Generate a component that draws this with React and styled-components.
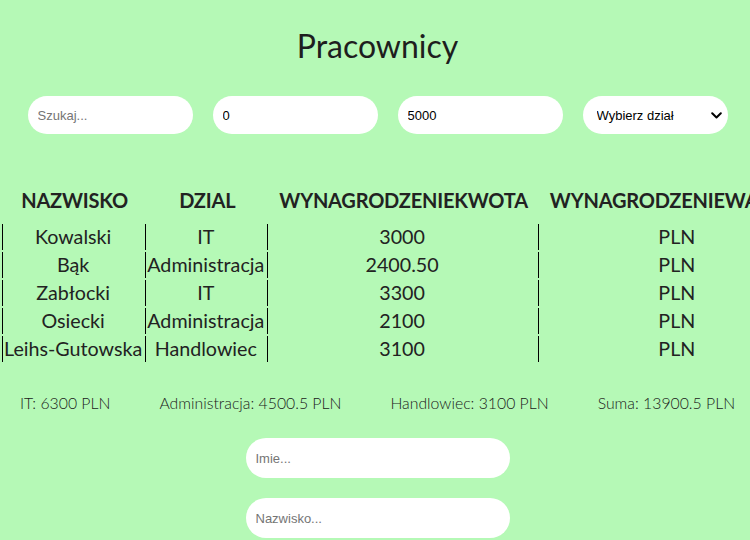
import React from "react";
import styled, { createGlobalStyle } from "styled-components";

const employees = [
  { nazwisko: "Kowalski", dzial: "IT", kwota: "3000", waluta: "PLN" },
  { nazwisko: "Bąk", dzial: "Administracja", kwota: "2400.50", waluta: "PLN" },
  { nazwisko: "Zabłocki", dzial: "IT", kwota: "3300", waluta: "PLN" },
  { nazwisko: "Osiecki", dzial: "Administracja", kwota: "2100", waluta: "PLN" },
  { nazwisko: "Leihs-Gutowska", dzial: "Handlowiec", kwota: "3100", waluta: "PLN" },
];

const summary = [
  "IT: 6300 PLN",
  "Administracja: 4500.5 PLN",
  "Handlowiec: 3100 PLN",
  "Suma: 13900.5 PLN",
];

const App = () => {
  return (
    <Page>
      <GlobalStyle />
      <Title>Pracownicy</Title>

      <Filters>
        <Field type="text" placeholder="Szukaj..." />
        <Field type="number" defaultValue="0" />
        <Field type="number" defaultValue="5000" />
        <SelectWrap>
          <Select defaultValue="">
            <option value="">Wybierz dział</option>
            <option value="IT">IT</option>
            <option value="Administracja">Administracja</option>
            <option value="Handlowiec">Handlowiec</option>
          </Select>
          <Chevron width="11" height="7" viewBox="0 0 11 7">
            <path d="M1.2 1.2 L5.5 5.5 L9.8 1.2" fill="none" stroke="#000" strokeWidth="2" strokeLinecap="round" strokeLinejoin="round" />
          </Chevron>
        </SelectWrap>
      </Filters>

      <Table>
        <thead>
          <tr>
            <Th>NAZWISKO</Th>
            <Th>DZIAL</Th>
            <Th>WYNAGRODZENIEKWOTA</Th>
            <Th>WYNAGRODZENIEWALUTA</Th>
          </tr>
        </thead>
        <tbody>
          {employees.map((e) => (
            <tr key={e.nazwisko}>
              <Td>{e.nazwisko}</Td>
              <Td>{e.dzial}</Td>
              <Td>{e.kwota}</Td>
              <Td>{e.waluta}</Td>
            </tr>
          ))}
        </tbody>
      </Table>

      <Summary>
        {summary.map((s) => (
          <SummaryItem key={s}>{s}</SummaryItem>
        ))}
      </Summary>

      <AddForm>
        <FormField type="text" placeholder="Imie..." />
        <FormField type="text" placeholder="Nazwisko..." />
      </AddForm>
    </Page>
  );
};

const GlobalStyle = createGlobalStyle`
  html, body {
    margin: 0;
    padding: 0;
    overflow: hidden;
    background-color: #b5f9b6;
  }
`;

const Page = styled.div`
  font-family: Lato, "Noto Sans", sans-serif;
  color: #222;
  padding-top: 27px;
`;

const Title = styled.h1`
  margin: 0;
  padding-left: 5px;
  font-size: 32px;
  font-weight: 400;
  line-height: 38px;
  text-align: center;
  color: #1e1e1e;
`;

const Filters = styled.div`
  display: flex;
  justify-content: center;
  gap: 20px;
  margin-top: 31px;
  padding-left: 5px;
`;

const Field = styled.input`
  width: 165px;
  height: 38px;
  box-sizing: border-box;
  border: none;
  outline: none;
  border-radius: 19px;
  background: #fff;
  padding: 0 10px;
  font-family: "Liberation Sans", Arial, sans-serif;
  font-size: 13px;
  color: #000;
  -moz-appearance: textfield;

  &::placeholder {
    color: #757575;
  }

  &::-webkit-outer-spin-button,
  &::-webkit-inner-spin-button {
    -webkit-appearance: none;
    margin: 0;
  }
`;

const SelectWrap = styled.div`
  position: relative;
  width: 145px;
  height: 38px;
`;

const Select = styled.select`
  appearance: none;
  -webkit-appearance: none;
  width: 100%;
  height: 100%;
  border: none;
  outline: none;
  border-radius: 19px;
  background: #fff;
  padding: 0 28px 0 14px;
  font-family: "Liberation Sans", Arial, sans-serif;
  font-size: 13px;
  color: #000;
`;

const Chevron = styled.svg`
  position: absolute;
  right: 6px;
  top: 16px;
  pointer-events: none;
`;

const Table = styled.table`
  margin-top: 42px;
  border-spacing: 2px;
  font-size: 20px;
  line-height: 24px;
`;

const Th = styled.th`
  padding: 10px 8px 10px 12px;
  font-weight: 700;
  letter-spacing: -0.2px;
  white-space: nowrap;
`;

const Td = styled.td`
  padding: 1px;
  font-size: 19.7px;
  text-align: center;
  border-left: 1px solid #000;
  white-space: nowrap;
`;

const Summary = styled.div`
  display: flex;
  justify-content: center;
  gap: 49px;
  margin-top: 30px;
  padding-left: 5px;
`;

const SummaryItem = styled.span`
  font-size: 15.8px;
  font-weight: 300;
  line-height: 18px;
  color: #1a1a1a;
`;

const AddForm = styled.form`
  display: flex;
  flex-direction: column;
  align-items: center;
  gap: 20px;
  margin-top: 26px;
  padding-left: 5px;
`;

const FormField = styled.input`
  width: 264px;
  height: 40px;
  box-sizing: border-box;
  border: none;
  outline: none;
  border-radius: 20px;
  background: #fff;
  padding: 0 10px;
  font-family: "Liberation Sans", Arial, sans-serif;
  font-size: 13px;

  &::placeholder {
    color: #757575;
  }
`;

export default App;
